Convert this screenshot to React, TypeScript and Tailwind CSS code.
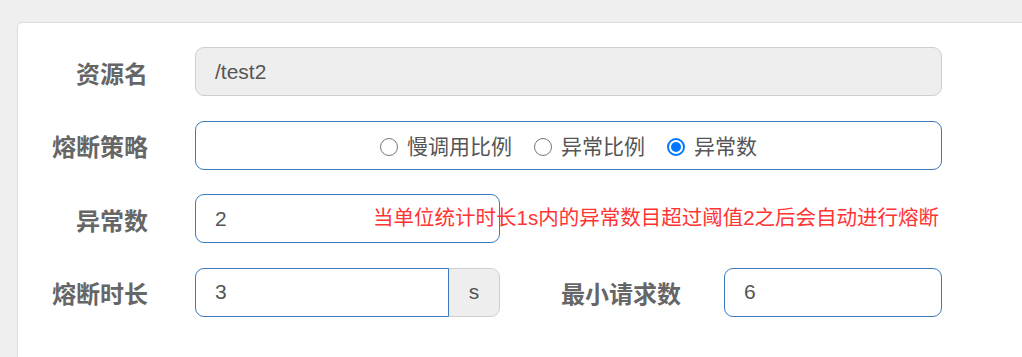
import React from "react";

const font = { fontFamily: '"Liberation Sans", "Noto Sans CJK SC", sans-serif' };

function Label({ text, width = "w-[130px]" }: { text: string; width?: string }) {
  return (
    <div className={`${width} shrink-0 pt-[6px] text-right text-[24px] font-bold text-[#666]`}>{text}</div>
  );
}

function Radio({ label, checked }: { label: string; checked?: boolean }) {
  return (
    <label className="flex items-center gap-[9px]">
      {checked ? (
        <span className="flex h-[18px] w-[18px] shrink-0 items-center justify-center rounded-full border-2 border-[#0075ff] bg-white">
          <span className="h-[10px] w-[10px] rounded-full bg-[#0075ff]" />
        </span>
      ) : (
        <span className="h-[18px] w-[18px] shrink-0 rounded-full border border-[#767676] bg-white" />
      )}
      <span>{label}</span>
    </label>
  );
}

export default function App() {
  return (
    <div className="h-[357px] w-[1022px] overflow-hidden bg-[#efefef] pt-[22px] pl-[17px]" style={font}>
      <div className="h-[400px] w-[1100px] rounded-tl-[5px] border border-[#dcdcdc] bg-white">
        <div className="flex flex-col gap-[24.5px] pt-[24px]">
          <div className="flex h-[49px] items-center">
            <Label text="资源名" />
            <div className="ml-[47px] flex h-full w-[747px] items-center rounded-[9px] border border-[#cfcfcf] bg-[#eeeeee] px-[19px] text-[21px] text-[#555]">
              /test2
            </div>
          </div>

          <div className="flex h-[49px] items-center">
            <Label text="熔断策略" />
            <div className="ml-[47px] flex h-full w-[747px] items-center justify-center gap-[22px] rounded-[9px] border border-[#3a7bbf] pt-[4px] text-[21px] text-[#555]">
              <Radio label="慢调用比例" />
              <Radio label="异常比例" />
              <Radio label="异常数" checked />
            </div>
          </div>

          <div className="relative flex h-[49px] items-center">
            <Label text="异常数" />
            <input
              readOnly
              value="2"
              className="ml-[47px] h-full w-[305px] rounded-[9px] border border-[#3a7bbf] px-[19px] text-[21px] text-[#555] outline-none"
            />
            <span className="absolute left-[355px] top-[9px] text-[20.5px] text-[#ff3434]">
              当单位统计时长1s内的异常数目超过阈值2之后会自动进行熔断
            </span>
          </div>

          <div className="flex h-[49px] items-center">
            <Label text="熔断时长" />
            <div className="ml-[47px] flex h-full w-[305px]">
              <input
                readOnly
                value="3"
                className="h-full w-[254px] rounded-l-[9px] border border-[#3a7bbf] px-[19px] text-[21px] text-[#555] outline-none"
              />
              <div className="flex h-full flex-1 items-center justify-center rounded-r-[9px] border border-l-0 border-[#cfcfcf] bg-[#eeeeee] text-[21px] text-[#555]">
                s
              </div>
            </div>
            <Label text="最小请求数" width="w-[181px]" />
            <input
              readOnly
              value="6"
              className="ml-[43px] h-full w-[218px] rounded-[9px] border border-[#3a7bbf] px-[19px] text-[21px] text-[#555] outline-none"
            />
          </div>
        </div>
      </div>
    </div>
  );
}
